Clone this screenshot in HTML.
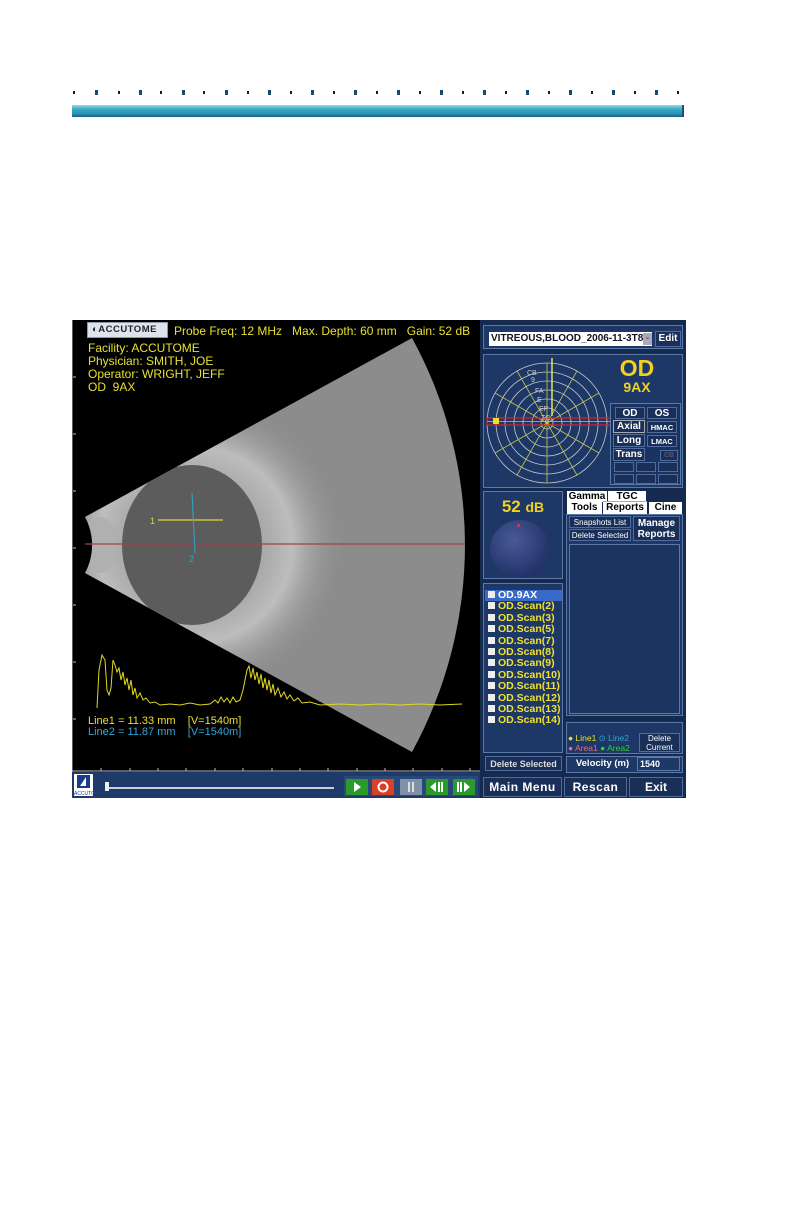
<!DOCTYPE html>
<html><head><meta charset="utf-8"><style>
*{margin:0;padding:0;box-sizing:border-box}
body{width:792px;height:1224px;background:#fff;position:relative;font-family:"Liberation Sans",Arial,sans-serif;overflow:hidden}
.a{position:absolute}
.dot{position:absolute;top:91px;width:2px;height:3px;background:#0a2030}
.dotb{position:absolute;top:90px;width:3px;height:5px;background:#1a4a6a}
.bar{left:72px;top:105px;width:612px;height:12px;background:linear-gradient(#8fdce6,#3aa9c4 35%,#2a8fb0 75%,#1a5f8a);border-right:2px solid #1a4f80}
.yl{color:#e8e030;font-size:12.5px;line-height:13px;white-space:nowrap}
.pnl{position:absolute;border:1px solid #5a78a8;background:#1d3866}
.btn{position:absolute;background:#1a2f58;border:1px solid #4f6c9c;color:#fff;font-weight:bold;text-align:center;white-space:nowrap}
.lst div{height:11.4px;font-size:10.5px;font-weight:bold;color:#f0e030;padding-left:3px;line-height:11px}
.lst div span{display:inline-block;width:7px;height:7px;background:#eee;margin-right:3px;vertical-align:0}
.tab{position:absolute;background:#fff;color:#000;font-weight:bold;font-size:10px;text-align:center;line-height:11px}
.pb{position:absolute;top:779px;width:22px;height:16px}
</style></head><body>
<div class="a bar"></div>

<div class="a" style="left:72px;top:320px;width:408px;height:452px;background:#000"></div>
<svg class="a" style="left:72px;top:320px" width="408" height="452" viewBox="72 320 408 452">
<defs>
<radialGradient id="eye" cx="195" cy="545" r="150" gradientUnits="userSpaceOnUse">
<stop offset="0.45" stop-color="#a8a8a8"/><stop offset="0.65" stop-color="#bdbdbd"/><stop offset="1" stop-color="#8e8e8e" stop-opacity="0"/>
</radialGradient>
<clipPath id="fc"><path d="M85 517 L412 338 A431 431 0 0 1 412 752 L85 573 A58 58 0 0 0 85 517Z"/></clipPath>
</defs>
<path d="M85 517 L412 338 A431 431 0 0 1 412 752 L85 573 A58 58 0 0 0 85 517Z" fill="#8c8c8c"/>
<g clip-path="url(#fc)">
<ellipse cx="230" cy="545" rx="150" ry="140" fill="url(#eye)"/>
<ellipse cx="100" cy="545" rx="18" ry="28" fill="#b0b0b0"/>
<ellipse cx="192" cy="545" rx="70" ry="80" fill="#5c5c5c"/>
</g>
<line x1="85" y1="544" x2="465" y2="544" stroke="#a04048" stroke-width="1.2"/>
<line x1="158" y1="520" x2="223" y2="520" stroke="#d8d838" stroke-width="1.2"/>
<text x="150" y="524" fill="#d8d838" font-size="9" font-family="Liberation Sans">1</text>
<line x1="192" y1="493" x2="195" y2="553" stroke="#30a8c8" stroke-width="1"/>
<text x="189" y="562" fill="#30a8c8" font-size="9" font-family="Liberation Sans">2</text>
<g stroke="#bbb" stroke-width="1">
<line x1="72" y1="320" x2="72" y2="772"/>
<line x1="73" y1="377" x2="76" y2="377"/><line x1="73" y1="434" x2="76" y2="434"/><line x1="73" y1="491" x2="76" y2="491"/><line x1="73" y1="548" x2="76" y2="548"/><line x1="73" y1="605" x2="76" y2="605"/><line x1="73" y1="662" x2="76" y2="662"/><line x1="73" y1="719" x2="76" y2="719"/>
<line x1="72" y1="771" x2="480" y2="771"/>
<line x1="101" y1="768" x2="101" y2="771"/><line x1="130" y1="768" x2="130" y2="771"/><line x1="158" y1="768" x2="158" y2="771"/><line x1="186" y1="768" x2="186" y2="771"/><line x1="215" y1="768" x2="215" y2="771"/><line x1="243" y1="768" x2="243" y2="771"/><line x1="272" y1="768" x2="272" y2="771"/><line x1="300" y1="768" x2="300" y2="771"/><line x1="328" y1="768" x2="328" y2="771"/><line x1="357" y1="768" x2="357" y2="771"/><line x1="385" y1="768" x2="385" y2="771"/><line x1="413" y1="768" x2="413" y2="771"/><line x1="442" y1="768" x2="442" y2="771"/><line x1="470" y1="768" x2="470" y2="771"/>
</g>
<polyline fill="none" stroke="#e0d820" stroke-width="1" points="97,708 99,670 102,655 105,660 107,690 109,695 111,688 113,660 115,665 117,672 119,668 121,680 123,672 125,685 127,678 129,690 131,680 133,695 135,688 137,698 140,693 143,700 146,698 150,703 155,702 160,705 170,704 180,705 190,703 200,705 210,704 215,700 218,703 221,697 224,702 227,698 230,703 233,697 236,702 240,700 243,690 245,680 247,670 249,666 251,678 253,668 255,680 257,672 259,684 261,674 263,688 265,678 267,690 269,680 271,693 273,684 275,695 278,688 281,697 284,692 287,699 290,695 294,701 298,698 302,703 310,702 320,705 340,704 360,705 380,704 400,705 420,704 440,705 462,704"/>
</svg>
<div class="a" style="left:87px;top:322px;width:81px;height:16px;background:#dde4ec;border:1px solid #8899aa;font-size:9.5px;font-weight:bold;color:#223;line-height:14px;letter-spacing:0.5px;padding-left:4px">◐ACCUTOME</div>
<div class="a yl" style="left:174px;top:325px;font-size:12px">Probe Freq: 12 MHz &nbsp; Max. Depth: 60 mm &nbsp; Gain: 52 dB</div>
<div class="a yl" style="left:88px;top:342px;font-size:12px">Facility: ACCUTOME<br>Physician: SMITH, JOE<br>Operator: WRIGHT, JEFF<br>OD &nbsp;9AX</div>
<div class="a yl" style="left:88px;top:716px;font-size:11px;line-height:11px">Line1 = 11.33 mm &nbsp; &nbsp;[V=1540m]</div>
<div class="a yl" style="left:88px;top:727px;font-size:11px;line-height:11px;color:#30a8d8">Line2 = 11.87 mm &nbsp; &nbsp;[V=1540m]</div>

<div class="a" style="left:72px;top:772px;width:408px;height:26px;background:#1e3a68"></div>
<div class="a" style="left:74px;top:774px;width:19px;height:22px;background:#fff"><svg width="19" height="22"><rect x="3" y="1" width="13" height="13" fill="#1a3a8a"/><path d="M6 12 L12 3 L12 12 Z" fill="#fff"/><text x="0" y="21" font-size="5" font-family="Liberation Sans" fill="#1a3a8a">ACCUTOME</text></svg></div>
<div class="a" style="left:108px;top:787px;width:226px;height:2px;background:#ccd"></div>
<div class="a" style="left:105px;top:782px;width:4px;height:9px;background:#eee"></div>
<div class="a" style="left:344px;top:776px;width:134px;height:20px;background:#274878"></div>
<div class="pb" style="left:346px;background:#2a9a2a"><svg width="22" height="16"><path d="M8 3 L15 8 L8 13Z" fill="#fff"/></svg></div>
<div class="pb" style="left:372px;background:#d84028"><svg width="22" height="16"><circle cx="11" cy="8" r="4.5" fill="none" stroke="#fff" stroke-width="2"/></svg></div>
<div class="pb" style="left:400px;background:#8090a8"><svg width="22" height="16"><rect x="8" y="3" width="2" height="10" fill="#ddd"/><rect x="12" y="3" width="2" height="10" fill="#ddd"/></svg></div>
<div class="pb" style="left:426px;background:#2a9a2a"><svg width="22" height="16"><path d="M4 8 L10 3 L10 13Z" fill="#fff"/><rect x="12" y="3" width="2" height="10" fill="#fff"/><rect x="15" y="3" width="2" height="10" fill="#fff"/></svg></div>
<div class="pb" style="left:453px;background:#2a9a2a"><svg width="22" height="16"><rect x="4" y="3" width="2" height="10" fill="#fff"/><rect x="7" y="3" width="2" height="10" fill="#fff"/><path d="M11 3 L17 8 L11 13Z" fill="#fff"/></svg></div>

<div class="a" style="left:480px;top:320px;width:206px;height:478px;background:#16294e"></div>
<div class="pnl" style="left:483px;top:325px;width:200px;height:24px"></div>
<div class="a" style="left:489px;top:332px;width:163px;height:14px;background:#fff;color:#112;font-size:10px;font-weight:bold;line-height:14px;padding-left:2px;white-space:nowrap;overflow:hidden">VITREOUS,BLOOD_2006-11-3T8</div>
<div class="a" style="left:643px;top:333px;width:9px;height:12px;background:#aab;font-size:7px;color:#335;text-align:center">⌄</div>
<div class="btn" style="left:655px;top:331px;width:26px;height:16px;font-size:10px;line-height:14px">Edit</div>
<div class="pnl" style="left:483px;top:354px;width:200px;height:134px"></div>
<svg class="a" style="left:485px;top:356px" width="130" height="130">
<g fill="none" stroke="#c8c8c8" stroke-width="0.8">
<circle cx="62" cy="67" r="60"/><circle cx="62" cy="67" r="51"/><circle cx="62" cy="67" r="42"/><circle cx="62" cy="67" r="33"/><circle cx="62" cy="67" r="24"/><circle cx="62" cy="67" r="15"/><circle cx="62" cy="67" r="6"/>
</g>
<g stroke="#c8c840" stroke-width="0.8">
<line x1="62" y1="7" x2="62" y2="127"/><line x1="32" y1="15" x2="92" y2="119"/><line x1="92" y1="15" x2="32" y2="119"/><line x1="10" y1="37" x2="114" y2="97"/><line x1="10" y1="97" x2="114" y2="37"/>
</g>
<line x1="67" y1="2" x2="67" y2="60" stroke="#e0e060" stroke-width="1.5"/>
<rect x="2" y="62" width="124" height="7" fill="none" stroke="#e02020" stroke-width="1.2"/>
<line x1="2" y1="65.5" x2="126" y2="65.5" stroke="#bbb" stroke-width="0.8"/>
<rect x="8" y="62" width="6" height="6" fill="#f0e020"/>
<g fill="#ccc" font-size="7" font-family="Liberation Sans"><text x="42" y="19">CB</text><text x="46" y="26">9</text><text x="50" y="37">FA</text><text x="52" y="46">E</text><text x="54" y="55">EP</text><text x="56" y="64">TC</text></g>
</svg>
<div class="a" style="left:612px;top:356px;width:50px;text-align:center;color:#f2d020;font-weight:bold;font-size:23px;line-height:24px">OD</div>
<div class="a" style="left:612px;top:379px;width:50px;text-align:center;color:#f2d020;font-weight:bold;font-size:14px">9AX</div>
<div class="pnl" style="left:610px;top:403px;width:71px;height:82px;background:#1a3260"></div>
<div class="btn" style="left:615px;top:407px;width:30px;height:12px;font-size:10px;line-height:11px">OD</div>
<div class="btn" style="left:647px;top:407px;width:30px;height:12px;font-size:10px;line-height:11px">OS</div>
<div class="btn" style="left:613px;top:420px;width:32px;height:13px;font-size:10px;line-height:12px;border-color:#aaa">Axial</div>
<div class="btn" style="left:647px;top:421px;width:30px;height:12px;font-size:7.5px;line-height:11px">HMAC</div>
<div class="btn" style="left:613px;top:434px;width:32px;height:13px;font-size:10px;line-height:12px">Long</div>
<div class="btn" style="left:647px;top:435px;width:30px;height:12px;font-size:7.5px;line-height:11px">LMAC</div>
<div class="btn" style="left:613px;top:448px;width:32px;height:13px;font-size:10px;line-height:12px">Trans</div>
<div class="btn" style="left:660px;top:450px;width:18px;height:11px;font-size:7px;color:#557;line-height:10px">CB</div>
<div class="btn" style="left:614px;top:462px;width:20px;height:10px"></div>
<div class="btn" style="left:636px;top:462px;width:20px;height:10px"></div>
<div class="btn" style="left:658px;top:462px;width:20px;height:10px"></div>
<div class="btn" style="left:614px;top:474px;width:20px;height:10px"></div>
<div class="btn" style="left:636px;top:474px;width:20px;height:10px"></div>
<div class="btn" style="left:658px;top:474px;width:20px;height:10px"></div>
<div class="pnl" style="left:483px;top:491px;width:80px;height:88px"></div>
<div class="a" style="left:484px;top:497px;width:78px;text-align:center;color:#f2d020;font-weight:bold;font-size:17px">52 <span style="font-size:14px">dB</span></div>
<div class="a" style="left:490px;top:520px;width:60px;height:58px;border-radius:50%;background:radial-gradient(circle at 40% 35%,#4a5a98,#283870 60%,#1a2654)"></div>
<div class="a" style="left:517px;top:524px;width:3px;height:3px;background:#e03040"></div>
<div class="pnl" style="left:483px;top:583px;width:80px;height:170px"></div>
<div class="a lst" style="left:485px;top:590px;width:77px">
<div style="background:#3a6ac8;color:#fff"><span></span>OD.9AX</div>
<div><span></span>OD.Scan(2)</div><div><span></span>OD.Scan(3)</div><div><span></span>OD.Scan(5)</div><div><span></span>OD.Scan(7)</div><div><span></span>OD.Scan(8)</div><div><span></span>OD.Scan(9)</div><div><span></span>OD.Scan(10)</div><div><span></span>OD.Scan(11)</div><div><span></span>OD.Scan(12)</div><div><span></span>OD.Scan(13)</div><div><span></span>OD.Scan(14)</div>
</div>
<div class="btn" style="left:485px;top:756px;width:77px;height:15px;font-size:9px;line-height:14px;color:#ddd">Delete Selected</div>
<div class="tab" style="left:567px;top:491px;width:40px;height:11px">Gamma</div>
<div class="tab" style="left:608px;top:491px;width:38px;height:11px">TGC</div>
<div class="tab" style="left:567px;top:502px;width:35px;height:12px">Tools</div>
<div class="tab" style="left:603px;top:501px;width:44px;height:13px;border-top:1px solid #e8a030">Reports</div>
<div class="tab" style="left:649px;top:502px;width:33px;height:12px">Cine</div>
<div class="pnl" style="left:566px;top:514px;width:117px;height:202px"></div>
<div class="btn" style="left:569px;top:516px;width:62px;height:12px;font-size:8px;font-weight:normal;line-height:11px">Snapshots List</div>
<div class="btn" style="left:569px;top:529px;width:62px;height:12px;font-size:8px;font-weight:normal;line-height:11px">Delete Selected</div>
<div class="btn" style="left:633px;top:516px;width:47px;height:25px;font-size:10px;line-height:11px;padding-top:1px">Manage<br>Reports</div>
<div class="pnl" style="left:569px;top:544px;width:111px;height:170px;background:#1c3460"></div>
<div class="pnl" style="left:566px;top:722px;width:117px;height:32px"></div>
<div class="a" style="left:568px;top:733px;font-size:8.5px;line-height:10px;color:#e8e030;white-space:nowrap">● Line1 <span style="color:#30a8d8">⊙ Line2</span><br><span style="color:#e07080">● Area1</span> <span style="color:#30d030">● Area2</span></div>
<div class="btn" style="left:639px;top:733px;width:41px;height:19px;font-size:8px;font-weight:normal;line-height:9px">Delete<br>Current</div>
<div class="pnl" style="left:566px;top:756px;width:117px;height:17px"></div>
<div class="a" style="left:570px;top:758px;width:65px;text-align:center;color:#fff;font-weight:bold;font-size:9.5px">Velocity (m)</div>
<div class="a" style="left:637px;top:757px;width:43px;height:14px;border:1px solid #5a78a8;color:#fff;font-weight:bold;font-size:9px;padding:1px 2px">1540</div>
<div class="btn" style="left:483px;top:777px;width:79px;height:20px;font-size:12px;line-height:19px;letter-spacing:0.5px">Main Menu</div>
<div class="btn" style="left:564px;top:777px;width:63px;height:20px;font-size:12px;line-height:19px;letter-spacing:0.5px">Rescan</div>
<div class="btn" style="left:629px;top:777px;width:54px;height:20px;font-size:12px;line-height:19px">Exit</div>
<div class="dot" style="left:73px"></div><div class="dotb" style="left:95px"></div><div class="dot" style="left:118px"></div><div class="dotb" style="left:139px"></div><div class="dot" style="left:160px"></div><div class="dotb" style="left:182px"></div><div class="dot" style="left:203px"></div><div class="dotb" style="left:225px"></div><div class="dot" style="left:247px"></div><div class="dotb" style="left:268px"></div><div class="dot" style="left:290px"></div><div class="dotb" style="left:311px"></div><div class="dot" style="left:333px"></div><div class="dotb" style="left:354px"></div><div class="dot" style="left:376px"></div><div class="dotb" style="left:397px"></div><div class="dot" style="left:419px"></div><div class="dotb" style="left:440px"></div><div class="dot" style="left:462px"></div><div class="dotb" style="left:483px"></div><div class="dot" style="left:505px"></div><div class="dotb" style="left:526px"></div><div class="dot" style="left:548px"></div><div class="dotb" style="left:569px"></div><div class="dot" style="left:591px"></div><div class="dotb" style="left:612px"></div><div class="dot" style="left:634px"></div><div class="dotb" style="left:655px"></div><div class="dot" style="left:677px"></div>
</body></html>
